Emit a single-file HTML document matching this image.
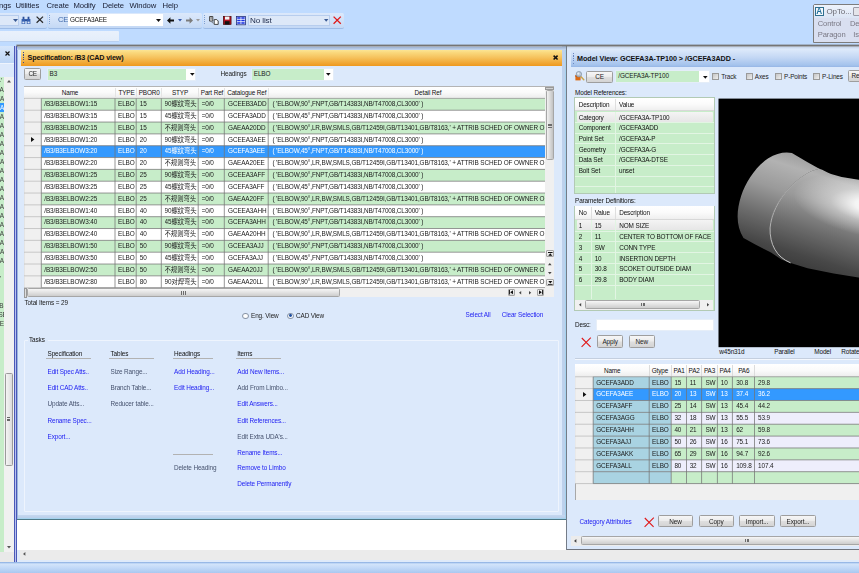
<!DOCTYPE html><html><head><meta charset="utf-8"><title>Specification</title><style>
html,body{margin:0;padding:0}
body{width:859px;height:573px;overflow:hidden;position:relative;background:#bfdbff;font-family:"Liberation Sans","Noto Sans CJK SC",sans-serif;font-size:6.4px;letter-spacing:-0.12px;color:#1a1a1a}
div{position:absolute;box-sizing:border-box}
svg{position:absolute;overflow:visible}
.t{height:10px;line-height:10px;white-space:nowrap;overflow:visible}
.b{font-weight:bold}
.btn{border:1px solid #9e9e9e;border-radius:1.5px;background:linear-gradient(#f6f6f6,#ececec 45%,#dedede 55%,#d4d4d4);text-align:center;font-size:6.4px;white-space:nowrap;color:#222}
.lnk{color:#1c1cf2}
.dis{color:#46526e}
</style></head><body style="filter:blur(0.35px)">
<div class="t" style="left:-1px;top:1.45px;font-size:7.7px;color:#181c30;">ngs</div>
<div class="t" style="left:15.5px;top:1.45px;font-size:7.7px;color:#181c30;">Utilities</div>
<div class="t" style="left:46.5px;top:1.45px;font-size:7.7px;color:#181c30;">Create</div>
<div class="t" style="left:73.5px;top:1.45px;font-size:7.7px;color:#181c30;">Modify</div>
<div class="t" style="left:102.5px;top:1.45px;font-size:7.7px;color:#181c30;">Delete</div>
<div class="t" style="left:129.5px;top:1.45px;font-size:7.7px;color:#181c30;">Window</div>
<div class="t" style="left:162.5px;top:1.45px;font-size:7.7px;color:#181c30;">Help</div>
<div style="left:0px;top:12.5px;width:46.5px;height:16px;background:linear-gradient(#dbe8fb,#cfe0f8 60%,#c3d8f5);border-bottom:1px solid #9dbbe6;border-radius:0 2px 2px 0"></div>
<div style="left:0px;top:14.5px;width:18.5px;height:11.5px;background:#dde8f8;border:1px solid #b7cdee;border-left:none"></div>
<svg style="left:12.5px;top:19px" width="5" height="3"><path d="M0 0h5L2.5 3z" fill="#3a5a94"/></svg>
<svg style="left:21px;top:15.5px" width="10" height="9" viewBox="0 0 10 9"><path d="M1.6 0.8h1.8v2.4H1.6zM6.6 0.8h1.8v2.4H6.6z" fill="#2b4f9a"/><path d="M0.6 3h3.6v5H0.6zM5.8 3h3.6v5H5.8z" fill="#3560b0"/><rect x="4" y="3.2" width="2" height="2" fill="#2b4f9a"/><rect x="1.4" y="5.6" width="2" height="1.8" fill="#dfe8f8"/><rect x="6.6" y="5.6" width="2" height="1.8" fill="#dfe8f8"/></svg>
<svg style="left:35.5px;top:16.3px" width="7.6" height="7.4" viewBox="0 0 7.6 7.4"><path d="M0.6 0.6L7 6.8M7 0.6L0.6 6.8" stroke="#2a2a2a" stroke-width="1.25"/></svg>
<div style="left:48px;top:12.5px;width:153.5px;height:16px;background:linear-gradient(#dbe8fb,#cfe0f8 60%,#c3d8f5);border-bottom:1px solid #9dbbe6;border-radius:2px"></div>
<div style="left:49.3px;top:15px;width:1px;height:10px;background:repeating-linear-gradient(#7f9fd0 0 1px,transparent 1px 2px)"></div>
<div class="t" style="left:58px;top:15.25px;font-size:7.6px;color:#3f68a8;">CE</div>
<div style="left:68px;top:14px;width:95px;height:11.5px;background:#fff"></div>
<div class="t" style="left:70px;top:14.75px;font-size:6.4px;color:#111;">GCEFA3AEE</div>
<svg style="left:156.3px;top:18.6px" width="5" height="3"><path d="M0 0h5L2.5 3z" fill="#111"/></svg>
<svg style="left:166.5px;top:16.8px" width="7" height="7" viewBox="0 0 7 7"><path d="M0 3.5L3.4 0.3V2.4H7V4.6H3.4V6.7z" fill="#111"/></svg>
<svg style="left:177.6px;top:19px" width="4" height="2.5"><path d="M0 0h4L2 2.5z" fill="#3558a8"/></svg>
<svg style="left:185.5px;top:16.8px" width="7" height="7" viewBox="0 0 7 7"><path d="M7 3.5L3.6 0.3V2.4H0V4.6H3.6V6.7z" fill="#7c7c7c"/></svg>
<svg style="left:196.3px;top:19px" width="4" height="2.5"><path d="M0 0h4L2 2.5z" fill="#9a9a9a"/></svg>
<div style="left:202.5px;top:12.5px;width:141.5px;height:16px;background:linear-gradient(#dbe8fb,#cfe0f8 60%,#c3d8f5);border-bottom:1px solid #9dbbe6;border-radius:2px"></div>
<div style="left:203.5px;top:15px;width:1px;height:10px;background:repeating-linear-gradient(#7f9fd0 0 1px,transparent 1px 2px)"></div>
<svg style="left:208.5px;top:15.8px" width="10" height="9" viewBox="0 0 10 9"><path d="M0.6 0.5h3.2v4.6H0.6z" fill="#e8e8e8" stroke="#333" stroke-width="0.9"/><path d="M1.4 1.8h1.6M1.4 3h1.6" stroke="#333" stroke-width="0.6"/><path d="M5.2 3.6h2.6l1.4 1.4v3.4H5.2z" fill="#fff" stroke="#333" stroke-width="0.9"/><path d="M2.6 6.2l2 1" stroke="#555" stroke-width="0.7"/></svg>
<svg style="left:223.2px;top:15.9px" width="8.4" height="8.8" viewBox="0 0 8.4 8.8"><rect x="0.3" y="0.3" width="7.8" height="8.2" fill="#b01020" stroke="#300" stroke-width="0.6"/><rect x="2" y="0.6" width="4.4" height="3" fill="#f4f4f4"/><rect x="1.8" y="5.2" width="4.8" height="3.3" fill="#111"/></svg>
<svg style="left:236px;top:15.7px" width="9.8" height="9.2" viewBox="0 0 9.8 9.2"><rect x="0.4" y="0.4" width="9" height="8.4" fill="#fff" stroke="#1c2a7a" stroke-width="0.8"/><rect x="1.2" y="1.2" width="3.4" height="1.6" fill="#1832e0"/><rect x="5.3" y="1.2" width="3.4" height="1.6" fill="#1832e0"/><rect x="1.2" y="3.7" width="3.4" height="1.6" fill="#1832e0"/><rect x="5.3" y="3.7" width="3.4" height="1.6" fill="#1832e0"/><rect x="1.2" y="6.2" width="3.4" height="1.6" fill="#1832e0"/><rect x="5.3" y="6.2" width="3.4" height="1.6" fill="#1832e0"/></svg>
<div style="left:248px;top:14.5px;width:82px;height:11.5px;background:#dde8f8;border:1px solid #b7cdee"></div>
<div class="t" style="left:250px;top:16.15px;font-size:8.1px;color:#1e2a4a;">No list</div>
<svg style="left:323.8px;top:19px" width="4.4" height="2.8"><path d="M0 0h4.4L2.2 2.8z" fill="#3a5a94"/></svg>
<svg style="left:332.7px;top:16px" width="8.4" height="8.4" viewBox="0 0 8.4 8.4"><path d="M0.6 0.6L7.8 7.8M7.8 0.6L0.6 7.8" stroke="#e01818" stroke-width="1.3"/></svg>
<div style="left:0px;top:30.5px;width:118.5px;height:11.5px;background:linear-gradient(#e9f1fc,#e3edfa);border-bottom:1px solid #b9d0f0;border-radius:0 1px 1px 0"></div>
<div style="left:812.5px;top:4px;width:50px;height:38.8px;background:#d9dff0;border:1px solid #7c7c7c;border-radius:2px 0 0 0"></div>
<div style="left:813.5px;top:5px;width:49px;height:13px;background:linear-gradient(#eef3fb,#dbe5f5)"></div>
<div style="left:815px;top:7px;width:8.8px;height:8.8px;background:#f4f8fc;border:1px solid #2f6f8f"></div>
<div class="t b" style="left:816.2px;top:6.85px;font-size:8.2px;color:#1f6f9a;">A</div>
<div class="t" style="left:826.5px;top:7.05px;font-size:8px;color:#6a6a72;">OpTo...</div>
<div style="left:853px;top:7px;width:10px;height:9px;background:#e4e4ea;border:1px solid #9a9aa6;border-radius:1px"></div>
<div class="t" style="left:817.7px;top:18.75px;font-size:7.6px;color:#7a7884;">Control</div>
<div class="t" style="left:850px;top:18.75px;font-size:7.6px;color:#7a7884;">De</div>
<div class="t" style="left:817.7px;top:29.65px;font-size:7.6px;color:#7a7884;">Paragon</div>
<div class="t" style="left:853.2px;top:29.65px;font-size:7.6px;color:#7a7884;">Is</div>
<div style="left:0px;top:46px;width:14.5px;height:516px;background:#f0f0f0"></div>
<div style="left:0px;top:46px;width:14.5px;height:17px;background:linear-gradient(#d6e6fb,#bcd5f5)"></div>
<svg style="left:5px;top:50.6px" width="5" height="5" viewBox="0 0 5 5"><path d="M0.5 0.5L4.5 4.5M4.5 0.5L0.5 4.5" stroke="#111" stroke-width="1.2"/></svg>
<div style="left:0px;top:63px;width:14.5px;height:13.5px;background:#dce9fb;border-top:0.8px solid #eef4fd"></div>
<div style="left:0px;top:76.5px;width:3.9px;height:475px;background:#c7edc9"></div>
<div style="left:0px;top:102.5px;width:4.2px;height:9px;background:#3399ff"></div>
<div class="t" style="left:-1px;top:76.05px;font-size:6.4px;color:#3a3a3a;width:4.9px;overflow:hidden;">-'</div>
<div class="t" style="left:-0.6px;top:85.05px;font-size:6.4px;color:#3a3a3a;width:4.5px;overflow:hidden;">A</div>
<div class="t" style="left:-3.4px;top:94.05px;font-size:6.4px;color:#3a3a3a;width:7.3px;overflow:hidden;">FA</div>
<div class="t" style="left:-3.4px;top:103.05px;font-size:6.4px;color:#fff;width:7.3px;overflow:hidden;">FA</div>
<div class="t" style="left:-1.4px;top:112.05px;font-size:6.4px;color:#3a3a3a;width:5.3px;overflow:hidden;">'A</div>
<div class="t" style="left:-1.4px;top:121.05px;font-size:6.4px;color:#3a3a3a;width:5.3px;overflow:hidden;">'A</div>
<div class="t" style="left:-1.4px;top:130.05px;font-size:6.4px;color:#3a3a3a;width:5.3px;overflow:hidden;">'A</div>
<div class="t" style="left:-1.4px;top:139.05px;font-size:6.4px;color:#3a3a3a;width:5.3px;overflow:hidden;">'A</div>
<div class="t" style="left:-1.4px;top:148.05px;font-size:6.4px;color:#3a3a3a;width:5.3px;overflow:hidden;">'A</div>
<div class="t" style="left:-3.4px;top:157.05px;font-size:6.4px;color:#3a3a3a;width:7.3px;overflow:hidden;">FA</div>
<div class="t" style="left:-1.4px;top:166.05px;font-size:6.4px;color:#3a3a3a;width:5.3px;overflow:hidden;">'A</div>
<div class="t" style="left:-1.4px;top:175.05px;font-size:6.4px;color:#3a3a3a;width:5.3px;overflow:hidden;">'A</div>
<div class="t" style="left:-1.4px;top:184.05px;font-size:6.4px;color:#3a3a3a;width:5.3px;overflow:hidden;">'A</div>
<div class="t" style="left:-1.4px;top:193.05px;font-size:6.4px;color:#3a3a3a;width:5.3px;overflow:hidden;">'A</div>
<div class="t" style="left:-1.4px;top:202.05px;font-size:6.4px;color:#3a3a3a;width:5.3px;overflow:hidden;">'A</div>
<div class="t" style="left:-1.4px;top:211.05px;font-size:6.4px;color:#3a3a3a;width:5.3px;overflow:hidden;">'A</div>
<div class="t" style="left:-1.4px;top:220.05px;font-size:6.4px;color:#3a3a3a;width:5.3px;overflow:hidden;">'A</div>
<div class="t" style="left:-1.4px;top:229.05px;font-size:6.4px;color:#3a3a3a;width:5.3px;overflow:hidden;">'A</div>
<div class="t" style="left:-1.4px;top:238.05px;font-size:6.4px;color:#3a3a3a;width:5.3px;overflow:hidden;">'A</div>
<div class="t" style="left:-3.4px;top:247.05px;font-size:6.4px;color:#3a3a3a;width:7.3px;overflow:hidden;">FA</div>
<div class="t" style="left:-1.4px;top:256.05px;font-size:6.4px;color:#3a3a3a;width:5.3px;overflow:hidden;">'A</div>
<div class="t" style="left:0px;top:274.05px;font-size:6.4px;color:#3a3a3a;width:3.9px;overflow:hidden;">'</div>
<div class="t" style="left:-0.8px;top:301.05px;font-size:6.4px;color:#3a3a3a;width:4.7px;overflow:hidden;">B</div>
<div class="t" style="left:-1.6px;top:310.05px;font-size:6.4px;color:#3a3a3a;width:5.5px;overflow:hidden;">SE</div>
<div class="t" style="left:-0.3px;top:319.05px;font-size:6.4px;color:#3a3a3a;width:4.2px;overflow:hidden;">E</div>
<div style="left:3.9px;top:76.5px;width:10px;height:475px;background:#f1f1f1"></div>
<svg style="left:7.3px;top:80px" width="4" height="2.4"><path d="M0 2.4h4L2 0z" fill="#555"/></svg>
<svg style="left:7.3px;top:545.5px" width="4" height="2.4"><path d="M0 0h4L2 2.4z" fill="#555"/></svg>
<div style="left:4.6px;top:372.5px;width:8px;height:93px;background:linear-gradient(90deg,#f4f4f4,#dcdcdc);border:1px solid #9a9a9a;border-radius:1.5px"></div>
<div style="left:6.8px;top:417px;width:3.5px;height:0.8px;background:#666"></div>
<div style="left:6.8px;top:418.7px;width:3.5px;height:0.8px;background:#666"></div>
<div style="left:6.8px;top:420.4px;width:3.5px;height:0.8px;background:#666"></div>
<div style="left:0px;top:551.6px;width:13.9px;height:10px;background:#e9e9e9"></div>
<div style="left:13.6px;top:46px;width:0.7px;height:515.6px;background:#a0a0a8"></div>
<div style="left:14.3px;top:46px;width:2.3px;height:515.6px;background:linear-gradient(90deg,#4a58b8 0,#4a58b8 30%,#b8c2ee 45%,#b8c2ee 58%,#4a58b8 70%,#4a58b8 100%)"></div>
<div style="left:16.5px;top:46.4px;width:549.5px;height:473px;background:#dce9fb"></div>
<div style="left:16.6px;top:46.4px;width:1px;height:515.4px;background:#e4eefc"></div>
<div style="left:17.4px;top:46.4px;width:0.8px;height:473px;background:#9db6dc"></div>
<div style="left:562.1px;top:46.4px;width:3.4px;height:472px;background:#bdd1ec"></div>
<div style="left:565.3px;top:46.4px;width:0.7px;height:472.4px;background:#a6d3ee"></div>
<div style="left:565.9px;top:46.4px;width:1px;height:503.6px;background:#747c88"></div>
<div style="left:18.2px;top:514.8px;width:547.3px;height:3.2px;background:linear-gradient(#c6d8f0,#bacfea)"></div>
<div style="left:18.2px;top:517.8px;width:547.8px;height:0.9px;background:#a6d3ee"></div>
<div style="left:17.4px;top:518.7px;width:548.6px;height:1px;background:#4f7a88"></div>
<div style="left:17.4px;top:46.6px;width:548.4px;height:3.4px;background:linear-gradient(#9db2d2,#c6d8f1)"></div>
<div style="left:21.3px;top:49.8px;width:540.9px;height:15.8px;background:linear-gradient(#fce594 0,#fad97e 15%,#f5c05a 50%,#f1a836 80%,#ee981e 100%)"></div>
<div style="left:23px;top:52px;width:1.2px;height:11px;background:repeating-linear-gradient(#3a4a8a 0 1.2px,transparent 1.2px 2.4px)"></div>
<div class="t b" style="left:27.6px;top:52.85px;font-size:7.2px;color:#111;letter-spacing:-0.15px;">Specification: /B3 (CAD view)</div>
<svg style="left:553.3px;top:55px" width="5.2" height="5.2" viewBox="0 0 5.2 5.2"><path d="M0.6 0.6L4.6 4.6M4.6 0.6L0.6 4.6" stroke="#111" stroke-width="1.5"/></svg>
<div class="btn" style="left:24.3px;top:68.3px;width:16.8px;height:12.2px;line-height:10.9px">CE</div>
<div style="left:46.7px;top:68.3px;width:149px;height:12.4px;background:#fff;border:1px solid #e4edf8"></div>
<div style="left:47.7px;top:69.3px;width:138.5px;height:10.4px;background:#c7edc9"></div>
<div class="t" style="left:49.5px;top:68.85px;font-size:6.4px;">B3</div>
<svg style="left:189.5px;top:73.3px" width="4.6" height="2.8"><path d="M0 0h4.6L2.3 2.8z" fill="#111"/></svg>
<div class="t" style="left:220.5px;top:69.05px;font-size:6.4px;">Headings</div>
<div style="left:251px;top:68.3px;width:82.6px;height:12.4px;background:#fff;border:1px solid #e4edf8"></div>
<div style="left:252px;top:69.3px;width:71.5px;height:10.4px;background:#c7edc9"></div>
<div class="t" style="left:253.8px;top:68.85px;font-size:6.4px;">ELBO</div>
<svg style="left:326.3px;top:73.3px" width="4.6" height="2.8"><path d="M0 0h4.6L2.3 2.8z" fill="#111"/></svg>
<div style="left:23.7px;top:86px;width:530.8px;height:211.3px;background:#fff;border-top:1px solid #b4b4b4;border-left:1px solid #b4b4b4"></div>
<div style="left:24.2px;top:86.5px;width:521.1px;height:11.9px;background:linear-gradient(#ffffff 0,#fafafa 50%,#ececec 100%)"></div>
<div class="t" style="left:40px;top:87.55px;font-size:6.4px;color:#111;width:60px;text-align:center;">Name</div>
<div class="t" style="left:96.5px;top:87.55px;font-size:6.4px;color:#111;width:60px;text-align:center;">TYPE</div>
<div class="t" style="left:119.2px;top:87.55px;font-size:6.4px;color:#111;width:60px;text-align:center;">PBOR0</div>
<div class="t" style="left:150px;top:87.55px;font-size:6.4px;color:#111;width:60px;text-align:center;">STYP</div>
<div class="t" style="left:182px;top:87.55px;font-size:6.4px;color:#111;width:60px;text-align:center;">Part Ref</div>
<div class="t" style="left:216.8px;top:87.55px;font-size:6.4px;color:#111;width:60px;text-align:center;">Catalogue Ref</div>
<div class="t" style="left:398px;top:87.55px;font-size:6.4px;color:#111;width:60px;text-align:center;">Detail Ref</div>
<div style="left:114.7px;top:87.5px;width:0.6px;height:9.9px;background:#e4e4e4"></div>
<div style="left:135.9px;top:87.5px;width:0.6px;height:9.9px;background:#e4e4e4"></div>
<div style="left:161px;top:87.5px;width:0.6px;height:9.9px;background:#e4e4e4"></div>
<div style="left:197.9px;top:87.5px;width:0.6px;height:9.9px;background:#e4e4e4"></div>
<div style="left:224px;top:87.5px;width:0.6px;height:9.9px;background:#e4e4e4"></div>
<div style="left:267.9px;top:87.5px;width:0.6px;height:9.9px;background:#e4e4e4"></div>
<svg style="left:0;top:0" width="859" height="573" viewBox="0 0 859 573"><rect x="24.2" y="98.4" width="17.1" height="11.83" fill="#f0f0f0" /><rect x="41.3" y="98.4" width="504" height="11.83" fill="#c7edc9" /><rect x="24.2" y="110.23" width="17.1" height="11.83" fill="#f0f0f0" /><rect x="41.3" y="110.23" width="504" height="11.83" fill="#fff" /><rect x="24.2" y="122.06" width="17.1" height="11.83" fill="#f0f0f0" /><rect x="41.3" y="122.06" width="504" height="11.83" fill="#c7edc9" /><rect x="24.2" y="133.89" width="17.1" height="11.83" fill="#f0f0f0" /><rect x="41.3" y="133.89" width="504" height="11.83" fill="#fff" /><rect x="24.2" y="145.72" width="17.1" height="11.83" fill="#f0f0f0" /><rect x="41.3" y="145.72" width="504" height="11.83" fill="#3399ff" /><rect x="24.2" y="157.55" width="17.1" height="11.83" fill="#f0f0f0" /><rect x="41.3" y="157.55" width="504" height="11.83" fill="#fff" /><rect x="24.2" y="169.38" width="17.1" height="11.83" fill="#f0f0f0" /><rect x="41.3" y="169.38" width="504" height="11.83" fill="#c7edc9" /><rect x="24.2" y="181.21" width="17.1" height="11.83" fill="#f0f0f0" /><rect x="41.3" y="181.21" width="504" height="11.83" fill="#fff" /><rect x="24.2" y="193.04" width="17.1" height="11.83" fill="#f0f0f0" /><rect x="41.3" y="193.04" width="504" height="11.83" fill="#c7edc9" /><rect x="24.2" y="204.87" width="17.1" height="11.83" fill="#f0f0f0" /><rect x="41.3" y="204.87" width="504" height="11.83" fill="#fff" /><rect x="24.2" y="216.7" width="17.1" height="11.83" fill="#f0f0f0" /><rect x="41.3" y="216.7" width="504" height="11.83" fill="#c7edc9" /><rect x="24.2" y="228.53" width="17.1" height="11.83" fill="#f0f0f0" /><rect x="41.3" y="228.53" width="504" height="11.83" fill="#fff" /><rect x="24.2" y="240.36" width="17.1" height="11.83" fill="#f0f0f0" /><rect x="41.3" y="240.36" width="504" height="11.83" fill="#c7edc9" /><rect x="24.2" y="252.19" width="17.1" height="11.83" fill="#f0f0f0" /><rect x="41.3" y="252.19" width="504" height="11.83" fill="#fff" /><rect x="24.2" y="264.02" width="17.1" height="11.83" fill="#f0f0f0" /><rect x="41.3" y="264.02" width="504" height="11.83" fill="#c7edc9" /><rect x="24.2" y="275.85" width="17.1" height="11.83" fill="#f0f0f0" /><rect x="41.3" y="275.85" width="504" height="11.83" fill="#fff" /><path d="M24.2 98.4H41.3" stroke="#b4b4b4" stroke-width="0.7"/><path d="M41.3 98.4H545.3" stroke="#8e8e8e" stroke-width="0.75"/><path d="M24.2 110.23H41.3" stroke="#b4b4b4" stroke-width="0.7"/><path d="M41.3 110.23H545.3" stroke="#747474" stroke-width="0.75"/><path d="M24.2 122.06H41.3" stroke="#b4b4b4" stroke-width="0.7"/><path d="M41.3 122.06H545.3" stroke="#747474" stroke-width="0.75"/><path d="M24.2 133.89H41.3" stroke="#b4b4b4" stroke-width="0.7"/><path d="M41.3 133.89H545.3" stroke="#747474" stroke-width="0.75"/><path d="M24.2 145.72H41.3" stroke="#b4b4b4" stroke-width="0.7"/><path d="M41.3 145.72H545.3" stroke="#747474" stroke-width="0.75"/><path d="M24.2 157.55H41.3" stroke="#b4b4b4" stroke-width="0.7"/><path d="M41.3 157.55H545.3" stroke="#747474" stroke-width="0.75"/><path d="M24.2 169.38H41.3" stroke="#b4b4b4" stroke-width="0.7"/><path d="M41.3 169.38H545.3" stroke="#747474" stroke-width="0.75"/><path d="M24.2 181.21H41.3" stroke="#b4b4b4" stroke-width="0.7"/><path d="M41.3 181.21H545.3" stroke="#747474" stroke-width="0.75"/><path d="M24.2 193.04H41.3" stroke="#b4b4b4" stroke-width="0.7"/><path d="M41.3 193.04H545.3" stroke="#747474" stroke-width="0.75"/><path d="M24.2 204.87H41.3" stroke="#b4b4b4" stroke-width="0.7"/><path d="M41.3 204.87H545.3" stroke="#747474" stroke-width="0.75"/><path d="M24.2 216.7H41.3" stroke="#b4b4b4" stroke-width="0.7"/><path d="M41.3 216.7H545.3" stroke="#747474" stroke-width="0.75"/><path d="M24.2 228.53H41.3" stroke="#b4b4b4" stroke-width="0.7"/><path d="M41.3 228.53H545.3" stroke="#747474" stroke-width="0.75"/><path d="M24.2 240.36H41.3" stroke="#b4b4b4" stroke-width="0.7"/><path d="M41.3 240.36H545.3" stroke="#747474" stroke-width="0.75"/><path d="M24.2 252.19H41.3" stroke="#b4b4b4" stroke-width="0.7"/><path d="M41.3 252.19H545.3" stroke="#747474" stroke-width="0.75"/><path d="M24.2 264.02H41.3" stroke="#b4b4b4" stroke-width="0.7"/><path d="M41.3 264.02H545.3" stroke="#747474" stroke-width="0.75"/><path d="M24.2 275.85H41.3" stroke="#b4b4b4" stroke-width="0.7"/><path d="M41.3 275.85H545.3" stroke="#747474" stroke-width="0.75"/><path d="M24.2 287.68H41.3" stroke="#b4b4b4" stroke-width="0.7"/><path d="M41.3 287.68H545.3" stroke="#747474" stroke-width="0.75"/><path d="M41.3 98.4V287.68" stroke="#747474" stroke-width="0.75"/><path d="M115 98.4V287.68" stroke="#747474" stroke-width="0.75"/><path d="M136.2 98.4V287.68" stroke="#747474" stroke-width="0.75"/><path d="M161.3 98.4V287.68" stroke="#747474" stroke-width="0.75"/><path d="M198.2 98.4V287.68" stroke="#747474" stroke-width="0.75"/><path d="M224.3 98.4V287.68" stroke="#747474" stroke-width="0.75"/><path d="M268.2 98.4V287.68" stroke="#747474" stroke-width="0.75"/></svg>
<div class="t" style="left:44.3px;top:99.17px;width:70.2px;overflow:hidden;color:#1a1a1a">/B3/B3ELBOW1:15</div>
<div class="t" style="left:118px;top:99.17px;width:17.7px;overflow:hidden;color:#1a1a1a">ELBO</div>
<div class="t" style="left:139.8px;top:99.17px;width:21px;overflow:hidden;color:#1a1a1a">15</div>
<div class="t" style="left:164.6px;top:99.17px;width:33.1px;overflow:hidden;color:#1a1a1a">90螺纹弯头</div>
<div class="t" style="left:201.6px;top:99.17px;width:22.2px;overflow:hidden;color:#1a1a1a">=0/0</div>
<div class="t" style="left:228.1px;top:99.17px;width:39.6px;overflow:hidden;color:#1a1a1a">GCEEB3ADD</div>
<div class="t" style="left:272.4px;top:99.17px;width:272.4px;overflow:hidden;color:#1a1a1a">( 'ELBOW,90°,FNPT,GB/T14383I,NB/T47008,CL3000' )</div>
<div class="t" style="left:44.3px;top:111px;width:70.2px;overflow:hidden;color:#1a1a1a">/B3/B3ELBOW3:15</div>
<div class="t" style="left:118px;top:111px;width:17.7px;overflow:hidden;color:#1a1a1a">ELBO</div>
<div class="t" style="left:139.8px;top:111px;width:21px;overflow:hidden;color:#1a1a1a">15</div>
<div class="t" style="left:164.6px;top:111px;width:33.1px;overflow:hidden;color:#1a1a1a">45螺纹弯头</div>
<div class="t" style="left:201.6px;top:111px;width:22.2px;overflow:hidden;color:#1a1a1a">=0/0</div>
<div class="t" style="left:228.1px;top:111px;width:39.6px;overflow:hidden;color:#1a1a1a">GCEFA3ADD</div>
<div class="t" style="left:272.4px;top:111px;width:272.4px;overflow:hidden;color:#1a1a1a">( 'ELBOW,45°,FNPT,GB/T14383I,NB/T47008,CL3000' )</div>
<div class="t" style="left:44.3px;top:122.83px;width:70.2px;overflow:hidden;color:#1a1a1a">/B3/B3ELBOW2:15</div>
<div class="t" style="left:118px;top:122.83px;width:17.7px;overflow:hidden;color:#1a1a1a">ELBO</div>
<div class="t" style="left:139.8px;top:122.83px;width:21px;overflow:hidden;color:#1a1a1a">15</div>
<div class="t" style="left:164.6px;top:122.83px;width:33.1px;overflow:hidden;color:#1a1a1a">不规则弯头</div>
<div class="t" style="left:201.6px;top:122.83px;width:22.2px;overflow:hidden;color:#1a1a1a">=0/0</div>
<div class="t" style="left:228.1px;top:122.83px;width:39.6px;overflow:hidden;color:#1a1a1a">GAEAA20DD</div>
<div class="t" style="left:272.4px;top:122.83px;width:272.4px;overflow:hidden;color:#1a1a1a">( 'ELBOW,90°,LR,BW,SMLS,GB/T12459I,GB/T13401,GB/T8163,' + ATTRIB SCHED OF OWNER OF OWNER + ',' )</div>
<div class="t" style="left:44.3px;top:134.66px;width:70.2px;overflow:hidden;color:#1a1a1a">/B3/B3ELBOW1:20</div>
<div class="t" style="left:118px;top:134.66px;width:17.7px;overflow:hidden;color:#1a1a1a">ELBO</div>
<div class="t" style="left:139.8px;top:134.66px;width:21px;overflow:hidden;color:#1a1a1a">20</div>
<div class="t" style="left:164.6px;top:134.66px;width:33.1px;overflow:hidden;color:#1a1a1a">90螺纹弯头</div>
<div class="t" style="left:201.6px;top:134.66px;width:22.2px;overflow:hidden;color:#1a1a1a">=0/0</div>
<div class="t" style="left:228.1px;top:134.66px;width:39.6px;overflow:hidden;color:#1a1a1a">GCEEA3AEE</div>
<div class="t" style="left:272.4px;top:134.66px;width:272.4px;overflow:hidden;color:#1a1a1a">( 'ELBOW,90°,FNPT,GB/T14383I,NB/T47008,CL3000' )</div>
<div class="t" style="left:44.3px;top:146.48px;width:70.2px;overflow:hidden;color:#fff">/B3/B3ELBOW3:20</div>
<div class="t" style="left:118px;top:146.48px;width:17.7px;overflow:hidden;color:#fff">ELBO</div>
<div class="t" style="left:139.8px;top:146.48px;width:21px;overflow:hidden;color:#fff">20</div>
<div class="t" style="left:164.6px;top:146.48px;width:33.1px;overflow:hidden;color:#fff">45螺纹弯头</div>
<div class="t" style="left:201.6px;top:146.48px;width:22.2px;overflow:hidden;color:#fff">=0/0</div>
<div class="t" style="left:228.1px;top:146.48px;width:39.6px;overflow:hidden;color:#fff">GCEFA3AEE</div>
<div class="t" style="left:272.4px;top:146.48px;width:272.4px;overflow:hidden;color:#fff">( 'ELBOW,45°,FNPT,GB/T14383I,NB/T47008,CL3000' )</div>
<div class="t" style="left:44.3px;top:158.31px;width:70.2px;overflow:hidden;color:#1a1a1a">/B3/B3ELBOW2:20</div>
<div class="t" style="left:118px;top:158.31px;width:17.7px;overflow:hidden;color:#1a1a1a">ELBO</div>
<div class="t" style="left:139.8px;top:158.31px;width:21px;overflow:hidden;color:#1a1a1a">20</div>
<div class="t" style="left:164.6px;top:158.31px;width:33.1px;overflow:hidden;color:#1a1a1a">不规则弯头</div>
<div class="t" style="left:201.6px;top:158.31px;width:22.2px;overflow:hidden;color:#1a1a1a">=0/0</div>
<div class="t" style="left:228.1px;top:158.31px;width:39.6px;overflow:hidden;color:#1a1a1a">GAEAA20EE</div>
<div class="t" style="left:272.4px;top:158.31px;width:272.4px;overflow:hidden;color:#1a1a1a">( 'ELBOW,90°,LR,BW,SMLS,GB/T12459I,GB/T13401,GB/T8163,' + ATTRIB SCHED OF OWNER OF OWNER + ',' )</div>
<div class="t" style="left:44.3px;top:170.14px;width:70.2px;overflow:hidden;color:#1a1a1a">/B3/B3ELBOW1:25</div>
<div class="t" style="left:118px;top:170.14px;width:17.7px;overflow:hidden;color:#1a1a1a">ELBO</div>
<div class="t" style="left:139.8px;top:170.14px;width:21px;overflow:hidden;color:#1a1a1a">25</div>
<div class="t" style="left:164.6px;top:170.14px;width:33.1px;overflow:hidden;color:#1a1a1a">90螺纹弯头</div>
<div class="t" style="left:201.6px;top:170.14px;width:22.2px;overflow:hidden;color:#1a1a1a">=0/0</div>
<div class="t" style="left:228.1px;top:170.14px;width:39.6px;overflow:hidden;color:#1a1a1a">GCEEA3AFF</div>
<div class="t" style="left:272.4px;top:170.14px;width:272.4px;overflow:hidden;color:#1a1a1a">( 'ELBOW,90°,FNPT,GB/T14383I,NB/T47008,CL3000' )</div>
<div class="t" style="left:44.3px;top:181.97px;width:70.2px;overflow:hidden;color:#1a1a1a">/B3/B3ELBOW3:25</div>
<div class="t" style="left:118px;top:181.97px;width:17.7px;overflow:hidden;color:#1a1a1a">ELBO</div>
<div class="t" style="left:139.8px;top:181.97px;width:21px;overflow:hidden;color:#1a1a1a">25</div>
<div class="t" style="left:164.6px;top:181.97px;width:33.1px;overflow:hidden;color:#1a1a1a">45螺纹弯头</div>
<div class="t" style="left:201.6px;top:181.97px;width:22.2px;overflow:hidden;color:#1a1a1a">=0/0</div>
<div class="t" style="left:228.1px;top:181.97px;width:39.6px;overflow:hidden;color:#1a1a1a">GCEFA3AFF</div>
<div class="t" style="left:272.4px;top:181.97px;width:272.4px;overflow:hidden;color:#1a1a1a">( 'ELBOW,45°,FNPT,GB/T14383I,NB/T47008,CL3000' )</div>
<div class="t" style="left:44.3px;top:193.81px;width:70.2px;overflow:hidden;color:#1a1a1a">/B3/B3ELBOW2:25</div>
<div class="t" style="left:118px;top:193.81px;width:17.7px;overflow:hidden;color:#1a1a1a">ELBO</div>
<div class="t" style="left:139.8px;top:193.81px;width:21px;overflow:hidden;color:#1a1a1a">25</div>
<div class="t" style="left:164.6px;top:193.81px;width:33.1px;overflow:hidden;color:#1a1a1a">不规则弯头</div>
<div class="t" style="left:201.6px;top:193.81px;width:22.2px;overflow:hidden;color:#1a1a1a">=0/0</div>
<div class="t" style="left:228.1px;top:193.81px;width:39.6px;overflow:hidden;color:#1a1a1a">GAEAA20FF</div>
<div class="t" style="left:272.4px;top:193.81px;width:272.4px;overflow:hidden;color:#1a1a1a">( 'ELBOW,90°,LR,BW,SMLS,GB/T12459I,GB/T13401,GB/T8163,' + ATTRIB SCHED OF OWNER OF OWNER + ',' )</div>
<div class="t" style="left:44.3px;top:205.63px;width:70.2px;overflow:hidden;color:#1a1a1a">/B3/B3ELBOW1:40</div>
<div class="t" style="left:118px;top:205.63px;width:17.7px;overflow:hidden;color:#1a1a1a">ELBO</div>
<div class="t" style="left:139.8px;top:205.63px;width:21px;overflow:hidden;color:#1a1a1a">40</div>
<div class="t" style="left:164.6px;top:205.63px;width:33.1px;overflow:hidden;color:#1a1a1a">90螺纹弯头</div>
<div class="t" style="left:201.6px;top:205.63px;width:22.2px;overflow:hidden;color:#1a1a1a">=0/0</div>
<div class="t" style="left:228.1px;top:205.63px;width:39.6px;overflow:hidden;color:#1a1a1a">GCEEA3AHH</div>
<div class="t" style="left:272.4px;top:205.63px;width:272.4px;overflow:hidden;color:#1a1a1a">( 'ELBOW,90°,FNPT,GB/T14383I,NB/T47008,CL3000' )</div>
<div class="t" style="left:44.3px;top:217.46px;width:70.2px;overflow:hidden;color:#1a1a1a">/B3/B3ELBOW3:40</div>
<div class="t" style="left:118px;top:217.46px;width:17.7px;overflow:hidden;color:#1a1a1a">ELBO</div>
<div class="t" style="left:139.8px;top:217.46px;width:21px;overflow:hidden;color:#1a1a1a">40</div>
<div class="t" style="left:164.6px;top:217.46px;width:33.1px;overflow:hidden;color:#1a1a1a">45螺纹弯头</div>
<div class="t" style="left:201.6px;top:217.46px;width:22.2px;overflow:hidden;color:#1a1a1a">=0/0</div>
<div class="t" style="left:228.1px;top:217.46px;width:39.6px;overflow:hidden;color:#1a1a1a">GCEFA3AHH</div>
<div class="t" style="left:272.4px;top:217.46px;width:272.4px;overflow:hidden;color:#1a1a1a">( 'ELBOW,45°,FNPT,GB/T14383I,NB/T47008,CL3000' )</div>
<div class="t" style="left:44.3px;top:229.29px;width:70.2px;overflow:hidden;color:#1a1a1a">/B3/B3ELBOW2:40</div>
<div class="t" style="left:118px;top:229.29px;width:17.7px;overflow:hidden;color:#1a1a1a">ELBO</div>
<div class="t" style="left:139.8px;top:229.29px;width:21px;overflow:hidden;color:#1a1a1a">40</div>
<div class="t" style="left:164.6px;top:229.29px;width:33.1px;overflow:hidden;color:#1a1a1a">不规则弯头</div>
<div class="t" style="left:201.6px;top:229.29px;width:22.2px;overflow:hidden;color:#1a1a1a">=0/0</div>
<div class="t" style="left:228.1px;top:229.29px;width:39.6px;overflow:hidden;color:#1a1a1a">GAEAA20HH</div>
<div class="t" style="left:272.4px;top:229.29px;width:272.4px;overflow:hidden;color:#1a1a1a">( 'ELBOW,90°,LR,BW,SMLS,GB/T12459I,GB/T13401,GB/T8163,' + ATTRIB SCHED OF OWNER OF OWNER + ',' )</div>
<div class="t" style="left:44.3px;top:241.12px;width:70.2px;overflow:hidden;color:#1a1a1a">/B3/B3ELBOW1:50</div>
<div class="t" style="left:118px;top:241.12px;width:17.7px;overflow:hidden;color:#1a1a1a">ELBO</div>
<div class="t" style="left:139.8px;top:241.12px;width:21px;overflow:hidden;color:#1a1a1a">50</div>
<div class="t" style="left:164.6px;top:241.12px;width:33.1px;overflow:hidden;color:#1a1a1a">90螺纹弯头</div>
<div class="t" style="left:201.6px;top:241.12px;width:22.2px;overflow:hidden;color:#1a1a1a">=0/0</div>
<div class="t" style="left:228.1px;top:241.12px;width:39.6px;overflow:hidden;color:#1a1a1a">GCEEA3AJJ</div>
<div class="t" style="left:272.4px;top:241.12px;width:272.4px;overflow:hidden;color:#1a1a1a">( 'ELBOW,90°,FNPT,GB/T14383I,NB/T47008,CL3000' )</div>
<div class="t" style="left:44.3px;top:252.96px;width:70.2px;overflow:hidden;color:#1a1a1a">/B3/B3ELBOW3:50</div>
<div class="t" style="left:118px;top:252.96px;width:17.7px;overflow:hidden;color:#1a1a1a">ELBO</div>
<div class="t" style="left:139.8px;top:252.96px;width:21px;overflow:hidden;color:#1a1a1a">50</div>
<div class="t" style="left:164.6px;top:252.96px;width:33.1px;overflow:hidden;color:#1a1a1a">45螺纹弯头</div>
<div class="t" style="left:201.6px;top:252.96px;width:22.2px;overflow:hidden;color:#1a1a1a">=0/0</div>
<div class="t" style="left:228.1px;top:252.96px;width:39.6px;overflow:hidden;color:#1a1a1a">GCEFA3AJJ</div>
<div class="t" style="left:272.4px;top:252.96px;width:272.4px;overflow:hidden;color:#1a1a1a">( 'ELBOW,45°,FNPT,GB/T14383I,NB/T47008,CL3000' )</div>
<div class="t" style="left:44.3px;top:264.79px;width:70.2px;overflow:hidden;color:#1a1a1a">/B3/B3ELBOW2:50</div>
<div class="t" style="left:118px;top:264.79px;width:17.7px;overflow:hidden;color:#1a1a1a">ELBO</div>
<div class="t" style="left:139.8px;top:264.79px;width:21px;overflow:hidden;color:#1a1a1a">50</div>
<div class="t" style="left:164.6px;top:264.79px;width:33.1px;overflow:hidden;color:#1a1a1a">不规则弯头</div>
<div class="t" style="left:201.6px;top:264.79px;width:22.2px;overflow:hidden;color:#1a1a1a">=0/0</div>
<div class="t" style="left:228.1px;top:264.79px;width:39.6px;overflow:hidden;color:#1a1a1a">GAEAA20JJ</div>
<div class="t" style="left:272.4px;top:264.79px;width:272.4px;overflow:hidden;color:#1a1a1a">( 'ELBOW,90°,LR,BW,SMLS,GB/T12459I,GB/T13401,GB/T8163,' + ATTRIB SCHED OF OWNER OF OWNER + ',' )</div>
<div class="t" style="left:44.3px;top:276.62px;width:70.2px;overflow:hidden;color:#1a1a1a">/B3/B3ELBOW2:80</div>
<div class="t" style="left:118px;top:276.62px;width:17.7px;overflow:hidden;color:#1a1a1a">ELBO</div>
<div class="t" style="left:139.8px;top:276.62px;width:21px;overflow:hidden;color:#1a1a1a">80</div>
<div class="t" style="left:164.6px;top:276.62px;width:33.1px;overflow:hidden;color:#1a1a1a">90对焊弯头</div>
<div class="t" style="left:201.6px;top:276.62px;width:22.2px;overflow:hidden;color:#1a1a1a">=0/0</div>
<div class="t" style="left:228.1px;top:276.62px;width:39.6px;overflow:hidden;color:#1a1a1a">GAEAA20LL</div>
<div class="t" style="left:272.4px;top:276.62px;width:272.4px;overflow:hidden;color:#1a1a1a">( 'ELBOW,90°,LR,BW,SMLS,GB/T12459I,GB/T13401,GB/T8163,' + ATTRIB SCHED OF OWNER OF OWNER + ',' )</div>
<svg style="left:30.6px;top:137.29px" width="3.4" height="5"><path d="M0 0L3.4 2.5L0 5z" fill="#111"/></svg>
<div style="left:545.3px;top:86.5px;width:9.2px;height:201.18px;background:#f0f0f0"></div>
<div style="left:545.3px;top:86.5px;width:9.2px;height:3.6px;background:linear-gradient(#e8e8e8,#b8b8b8);border:0.5px solid #999"></div>
<div style="left:545.6px;top:90.2px;width:8.6px;height:69.5px;background:linear-gradient(90deg,#f2f2f2,#dadada 50%,#c2c2c2);border:0.7px solid #a6a6a6;border-radius:1.5px"></div>
<div style="left:548px;top:123.6px;width:3.6px;height:0.7px;background:#6c6c6c"></div>
<div style="left:548px;top:125.2px;width:3.6px;height:0.7px;background:#6c6c6c"></div>
<div style="left:548px;top:126.8px;width:3.6px;height:0.7px;background:#6c6c6c"></div>
<div style="left:546.3px;top:250px;width:7.4px;height:7.3px;background:linear-gradient(#f8f8f8,#dcdcdc);border:0.7px solid #a4a4a4;border-radius:1px"></div>
<svg style="left:547.7px;top:251.8px" width="4.6" height="3.8" viewBox="0 0 4.6 3.8"><path d="M0 0h4.6v0.9H0zM0.3 3.8h4L2.3 1.2z" fill="#111"/></svg>
<svg style="left:548.2px;top:262.9px" width="3.6" height="2.2"><path d="M0 2.2h3.6L1.8 0z" fill="#444"/></svg>
<svg style="left:548.2px;top:272px" width="3.6" height="2.2"><path d="M0 0h3.6L1.8 2.2z" fill="#444"/></svg>
<div style="left:546.3px;top:278.8px;width:7.4px;height:7.3px;background:linear-gradient(#f8f8f8,#dcdcdc);border:0.7px solid #a4a4a4;border-radius:1px"></div>
<svg style="left:547.7px;top:280.6px" width="4.6" height="3.8" viewBox="0 0 4.6 3.8"><path d="M0 2.9h4.6v0.9H0zM0.3 0h4L2.3 2.6z" fill="#111"/></svg>
<div style="left:24.2px;top:287.68px;width:530.3px;height:9.62px;background:#f0f0f0"></div>
<div style="left:24.2px;top:287.98px;width:2.6px;height:9.6px;background:linear-gradient(90deg,#f4f4f4,#c8c8c8);border:0.6px solid #999"></div>
<div style="left:27px;top:288.08px;width:312.6px;height:9.3px;background:linear-gradient(#f6f6f6,#e2e2e2 50%,#cdcdcd);border:0.7px solid #a6a6a6;border-radius:1.5px"></div>
<div style="left:181.3px;top:290.98px;width:0.7px;height:3.6px;background:#6c6c6c"></div>
<div style="left:182.9px;top:290.98px;width:0.7px;height:3.6px;background:#6c6c6c"></div>
<div style="left:184.5px;top:290.98px;width:0.7px;height:3.6px;background:#6c6c6c"></div>
<div style="left:507.6px;top:288.58px;width:7.6px;height:7.7px;background:linear-gradient(#f8f8f8,#dcdcdc);border:0.7px solid #a4a4a4;border-radius:1px"></div>
<svg style="left:509.4px;top:290.38px" width="4" height="4.4" viewBox="0 0 4 4.4"><path d="M0 0h0.9v4.4H0zM4 0.2v4L1.2 2.2z" fill="#111"/></svg>
<svg style="left:519px;top:290.78px" width="2.2" height="3.6"><path d="M2.2 0v3.6L0 1.8z" fill="#444"/></svg>
<svg style="left:529px;top:290.78px" width="2.2" height="3.6"><path d="M0 0v3.6L2.2 1.8z" fill="#444"/></svg>
<div style="left:536.8px;top:288.58px;width:7.6px;height:7.7px;background:linear-gradient(#f8f8f8,#dcdcdc);border:0.7px solid #a4a4a4;border-radius:1px"></div>
<svg style="left:538.6px;top:290.38px" width="4" height="4.4" viewBox="0 0 4 4.4"><path d="M3.1 0h0.9v4.4H3.1zM0 0.2v4L2.8 2.2z" fill="#111"/></svg>
<div class="t" style="left:24.5px;top:298.25px;font-size:6.4px;">Total Items = 29</div>
<div style="left:242.3px;top:312.6px;width:6.4px;height:6.4px;border-radius:50%;background:radial-gradient(#fff 40%,#e0e4ea);border:0.8px solid #8a96a8"></div>
<div class="t" style="left:251px;top:311.25px;font-size:6.4px;color:#222;">Eng. View</div>
<div style="left:287.3px;top:312.6px;width:6.4px;height:6.4px;border-radius:50%;background:radial-gradient(#fff 40%,#e0e4ea);border:0.8px solid #8a96a8"></div>
<div style="left:289.1px;top:314.4px;width:2.8px;height:2.8px;border-radius:50%;background:#1f4fa0"></div>
<div class="t" style="left:296px;top:311.25px;font-size:6.4px;color:#222;">CAD View</div>
<div class="t lnk" style="left:465.5px;top:309.95px;font-size:6.4px;">Select All</div>
<div class="t lnk" style="left:501.7px;top:309.95px;font-size:6.4px;">Clear Selection</div>
<div style="left:24.2px;top:340px;width:534.9px;height:171.5px;border:1px solid #eef4fd;border-radius:1px"></div>
<div style="left:27.5px;top:335px;width:20.5px;height:10px;background:#dce9fb"></div>
<div class="t" style="left:29px;top:335.45px;font-size:6.4px;color:#111;">Tasks</div>
<div class="t" style="left:47.5px;top:348.65px;font-size:6.4px;color:#111;">Specification</div>
<div style="left:46.2px;top:358.2px;width:45px;height:0.8px;background:#b2b2b2"></div>
<div class="t" style="left:110.5px;top:348.65px;font-size:6.4px;color:#111;">Tables</div>
<div style="left:109.2px;top:358.2px;width:45px;height:0.8px;background:#b2b2b2"></div>
<div class="t" style="left:174px;top:348.65px;font-size:6.4px;color:#111;">Headings</div>
<div style="left:172.7px;top:358.2px;width:40.5px;height:0.8px;background:#b2b2b2"></div>
<div class="t" style="left:237.3px;top:348.65px;font-size:6.4px;color:#111;">Items</div>
<div style="left:236px;top:358.2px;width:45px;height:0.8px;background:#b2b2b2"></div>
<div class="t lnk" style="left:47.5px;top:366.95px;font-size:6.4px;">Edit Spec Atts..</div>
<div class="t lnk" style="left:47.5px;top:383.25px;font-size:6.4px;">Edit CAD Atts..</div>
<div class="t dis" style="left:47.5px;top:399.45px;font-size:6.4px;">Update Atts...</div>
<div class="t lnk" style="left:47.5px;top:415.75px;font-size:6.4px;">Rename Spec...</div>
<div class="t lnk" style="left:47.5px;top:432.05px;font-size:6.4px;">Export...</div>
<div class="t dis" style="left:110.5px;top:366.95px;font-size:6.4px;">Size Range...</div>
<div class="t dis" style="left:110.5px;top:383.25px;font-size:6.4px;">Branch Table...</div>
<div class="t dis" style="left:110.5px;top:399.45px;font-size:6.4px;">Reducer table...</div>
<div class="t lnk" style="left:174px;top:366.95px;font-size:6.4px;">Add Heading...</div>
<div class="t lnk" style="left:174px;top:383.25px;font-size:6.4px;">Edit Heading...</div>
<div class="t dis" style="left:174px;top:462.95px;font-size:6.4px;">Delete Heading</div>
<div class="t lnk" style="left:237.3px;top:366.95px;font-size:6.4px;">Add New Items...</div>
<div class="t dis" style="left:237.3px;top:383.25px;font-size:6.4px;">Add From Limbo...</div>
<div class="t lnk" style="left:237.3px;top:399.45px;font-size:6.4px;">Edit Answers...</div>
<div class="t lnk" style="left:237.3px;top:415.75px;font-size:6.4px;">Edit References...</div>
<div class="t dis" style="left:237.3px;top:432.05px;font-size:6.4px;">Edit Extra UDA's...</div>
<div class="t lnk" style="left:237.3px;top:448.35px;font-size:6.4px;">Rename Items...</div>
<div class="t lnk" style="left:237.3px;top:462.95px;font-size:6.4px;">Remove to Limbo</div>
<div class="t lnk" style="left:237.3px;top:479.05px;font-size:6.4px;">Delete Permanently</div>
<div style="left:172.7px;top:453.8px;width:40.5px;height:0.8px;background:#b2b2b2"></div>
<div style="left:17.4px;top:519.7px;width:548.4px;height:30px;background:#fff"></div>
<div style="left:16.6px;top:549.5px;width:843px;height:12.4px;background:#dfeaf9"></div>
<div style="left:19.5px;top:549.7px;width:840px;height:10.3px;background:#ebebeb"></div>
<svg style="left:23.4px;top:552.2px" width="2.4" height="3.8"><path d="M2.4 0v3.8L0 1.9z" fill="#555"/></svg>
<div style="left:0px;top:561.6px;width:859px;height:11.4px;background:linear-gradient(#86aadf 0,#a8c6ee 9%,#d3e4fa 18%,#c3daf8 50%,#a9c8f0 100%)"></div>
<div style="left:566.7px;top:46.4px;width:300px;height:503.6px;background:#dce9fb;border-bottom:1.1px solid #70747c"></div>
<div style="left:567px;top:46.5px;width:293px;height:2.2px;background:linear-gradient(#c4d4ea,#dce9fb)"></div>
<div style="left:571px;top:50.4px;width:290px;height:16.4px;background:linear-gradient(#dbe8fa 0,#c3d7f4 45%,#a3c2ec 90%,#95b5e5 100%)"></div>
<div style="left:572.6px;top:52.5px;width:1.2px;height:11px;background:repeating-linear-gradient(#6a86c0 0 1.2px,transparent 1.2px 2.4px)"></div>
<div class="t b" style="left:577px;top:53.65px;font-size:7.2px;color:#111;letter-spacing:-0.04px;">Model View: GCEFA3A-TP100 &gt; /GCEFA3ADD -</div>
<svg style="left:574.6px;top:70.8px" width="9.6" height="9.8" viewBox="0 0 9.6 9.8"><rect x="0.4" y="4.2" width="5.2" height="5.2" fill="#dc6a14"/><rect x="0.4" y="4.2" width="5.2" height="1.6" fill="#b85008"/><path d="M5.8 5.6L8.8 8.8" stroke="#c9a64e" stroke-width="1.5" stroke-linecap="round"/><circle cx="3.9" cy="3.2" r="2.7" fill="#b9c6d2" fill-opacity="0.92" stroke="#8796a8" stroke-width="0.8"/><circle cx="3.3" cy="2.6" r="1.1" fill="#e6edf4"/></svg>
<div class="btn" style="left:586.2px;top:70.5px;width:26.8px;height:12.1px;line-height:10.9px">CE</div>
<div style="left:615px;top:70.4px;width:94.5px;height:12.3px;background:#fff;border:1px solid #e4edf8"></div>
<div style="left:616px;top:71.3px;width:82.5px;height:10.5px;background:#c7edc9"></div>
<div class="t" style="left:618.3px;top:70.85px;font-size:6.4px;">/GCEFA3A-TP100</div>
<svg style="left:702.5px;top:75.5px" width="4.6" height="2.8"><path d="M0 0h4.6L2.3 2.8z" fill="#111"/></svg>
<div style="left:711.5px;top:73.1px;width:7.4px;height:7.4px;background:linear-gradient(135deg,#c6c6c6,#eeeeee);border:0.8px solid #9a9a9a"></div>
<div class="t" style="left:721.3px;top:72.45px;font-size:6.4px;color:#222;">Track</div>
<div style="left:745.7px;top:73.1px;width:7.4px;height:7.4px;background:linear-gradient(135deg,#c6c6c6,#eeeeee);border:0.8px solid #9a9a9a"></div>
<div class="t" style="left:754.8px;top:72.45px;font-size:6.4px;color:#222;">Axes</div>
<div style="left:774.7px;top:73.1px;width:7.4px;height:7.4px;background:linear-gradient(135deg,#c6c6c6,#eeeeee);border:0.8px solid #9a9a9a"></div>
<div class="t" style="left:784px;top:72.45px;font-size:6.4px;color:#222;">P-Points</div>
<div style="left:813px;top:73.1px;width:7.4px;height:7.4px;background:linear-gradient(135deg,#c6c6c6,#eeeeee);border:0.8px solid #9a9a9a"></div>
<div class="t" style="left:822px;top:72.45px;font-size:6.4px;color:#222;">P-Lines</div>
<div class="btn" style="left:848px;top:70.3px;width:20px;height:12px;line-height:10.4px;text-align:left;padding-left:2.5px">Re</div>
<div class="t" style="left:575px;top:87.55px;font-size:6.4px;color:#111;">Model References:</div>
<div style="left:574.2px;top:97px;width:140.5px;height:96.9px;background:#c7edc9;border:1px solid #b2cab4"></div>
<div style="left:574.9px;top:97.7px;width:139.1px;height:13.5px;background:linear-gradient(#ffffff,#fbfbfb 50%,#efefef);border-bottom:0.7px solid #d8d8d8"></div>
<div style="left:615.2px;top:98.5px;width:0.6px;height:11.5px;background:#dedede"></div>
<div class="t" style="left:578.7px;top:99.6px;font-size:6.4px;color:#111;">Description</div>
<div class="t" style="left:619px;top:99.6px;font-size:6.4px;color:#111;">Value</div>
<div style="left:577.2px;top:111.64px;width:136px;height:10.12px;background:linear-gradient(#f4f4f4,#e6e6e6);border-radius:1px"></div>
<div style="left:574.9px;top:121.96px;width:139.1px;height:0.6px;background:#e2f5e3"></div>
<div style="left:574.9px;top:132.68px;width:139.1px;height:0.6px;background:#e2f5e3"></div>
<div style="left:574.9px;top:143.4px;width:139.1px;height:0.6px;background:#e2f5e3"></div>
<div style="left:574.9px;top:154.12px;width:139.1px;height:0.6px;background:#e2f5e3"></div>
<div style="left:574.9px;top:164.84px;width:139.1px;height:0.6px;background:#e2f5e3"></div>
<div style="left:574.9px;top:175.56px;width:139.1px;height:0.6px;background:#e2f5e3"></div>
<div style="left:574.9px;top:186.28px;width:139.1px;height:0.6px;background:#e2f5e3"></div>
<div style="left:615.2px;top:111.5px;width:0.6px;height:81.7px;background:#e2f5e3"></div>
<div class="t" style="left:578.7px;top:112.55px;font-size:6.4px;color:#111;">Category</div>
<div class="t" style="left:619px;top:112.55px;font-size:6.4px;color:#111;">/GCEFA3A-TP100</div>
<div class="t" style="left:578.7px;top:123.27px;font-size:6.4px;color:#111;">Component</div>
<div class="t" style="left:619px;top:123.27px;font-size:6.4px;color:#111;">/GCEFA3ADD</div>
<div class="t" style="left:578.7px;top:133.99px;font-size:6.4px;color:#111;">Point Set</div>
<div class="t" style="left:619px;top:133.99px;font-size:6.4px;color:#111;">/GCEFA3A-P</div>
<div class="t" style="left:578.7px;top:144.71px;font-size:6.4px;color:#111;">Geometry</div>
<div class="t" style="left:619px;top:144.71px;font-size:6.4px;color:#111;">/GCEFA3A-G</div>
<div class="t" style="left:578.7px;top:155.43px;font-size:6.4px;color:#111;">Data Set</div>
<div class="t" style="left:619px;top:155.43px;font-size:6.4px;color:#111;">/GCEFA3A-DTSE</div>
<div class="t" style="left:578.7px;top:166.15px;font-size:6.4px;color:#111;">Bolt Set</div>
<div class="t" style="left:619px;top:166.15px;font-size:6.4px;color:#111;">unset</div>
<div class="t" style="left:575px;top:195.85px;font-size:6.4px;color:#111;">Parameter Definitions:</div>
<div style="left:574.2px;top:205.5px;width:140.5px;height:105.4px;background:#c7edc9;border:1px solid #b2cab4"></div>
<div style="left:574.9px;top:206.2px;width:139.1px;height:13.5px;background:linear-gradient(#ffffff,#fbfbfb 50%,#efefef);border-bottom:0.7px solid #d8d8d8"></div>
<div style="left:591px;top:207px;width:0.6px;height:11.5px;background:#dedede"></div>
<div style="left:615.2px;top:207px;width:0.6px;height:11.5px;background:#dedede"></div>
<div class="t" style="left:578.7px;top:208.1px;font-size:6.4px;color:#111;">No</div>
<div class="t" style="left:594.7px;top:208.1px;font-size:6.4px;color:#111;">Value</div>
<div class="t" style="left:619.2px;top:208.1px;font-size:6.4px;color:#111;">Description</div>
<div style="left:577.2px;top:220.09px;width:136px;height:10.22px;background:linear-gradient(#f4f4f4,#e6e6e6);border-radius:1px"></div>
<div style="left:574.9px;top:230.51px;width:139.1px;height:0.6px;background:#e2f5e3"></div>
<div style="left:574.9px;top:241.33px;width:139.1px;height:0.6px;background:#e2f5e3"></div>
<div style="left:574.9px;top:252.15px;width:139.1px;height:0.6px;background:#e2f5e3"></div>
<div style="left:574.9px;top:262.97px;width:139.1px;height:0.6px;background:#e2f5e3"></div>
<div style="left:574.9px;top:273.79px;width:139.1px;height:0.6px;background:#e2f5e3"></div>
<div style="left:574.9px;top:284.61px;width:139.1px;height:0.6px;background:#e2f5e3"></div>
<div style="left:591px;top:220px;width:0.6px;height:79.4px;background:#e2f5e3"></div>
<div style="left:615.2px;top:220px;width:0.6px;height:79.4px;background:#e2f5e3"></div>
<div class="t" style="left:578.7px;top:221.05px;font-size:6.4px;color:#111;">1</div>
<div class="t" style="left:594.7px;top:221.05px;font-size:6.4px;color:#111;">15</div>
<div class="t" style="left:619.2px;top:221.05px;font-size:6.4px;color:#111;">NOM SIZE</div>
<div class="t" style="left:578.7px;top:231.87px;font-size:6.4px;color:#111;">2</div>
<div class="t" style="left:594.7px;top:231.87px;font-size:6.4px;color:#111;">11</div>
<div class="t" style="left:619.2px;top:231.87px;font-size:6.4px;color:#111;">CENTER TO BOTTOM OF FACE</div>
<div class="t" style="left:578.7px;top:242.69px;font-size:6.4px;color:#111;">3</div>
<div class="t" style="left:594.7px;top:242.69px;font-size:6.4px;color:#111;">SW</div>
<div class="t" style="left:619.2px;top:242.69px;font-size:6.4px;color:#111;">CONN TYPE</div>
<div class="t" style="left:578.7px;top:253.51px;font-size:6.4px;color:#111;">4</div>
<div class="t" style="left:594.7px;top:253.51px;font-size:6.4px;color:#111;">10</div>
<div class="t" style="left:619.2px;top:253.51px;font-size:6.4px;color:#111;">INSERTION DEPTH</div>
<div class="t" style="left:578.7px;top:264.33px;font-size:6.4px;color:#111;">5</div>
<div class="t" style="left:594.7px;top:264.33px;font-size:6.4px;color:#111;">30.8</div>
<div class="t" style="left:619.2px;top:264.33px;font-size:6.4px;color:#111;">SCOKET OUTSIDE DIAM</div>
<div class="t" style="left:578.7px;top:275.15px;font-size:6.4px;color:#111;">6</div>
<div class="t" style="left:594.7px;top:275.15px;font-size:6.4px;color:#111;">29.8</div>
<div class="t" style="left:619.2px;top:275.15px;font-size:6.4px;color:#111;">BODY DIAM</div>
<div style="left:575.3px;top:299.6px;width:138px;height:10px;background:#f0f0f0"></div>
<svg style="left:578.6px;top:302.9px" width="2.2" height="3.6"><path d="M2.2 0v3.6L0 1.8z" fill="#444"/></svg>
<div style="left:585px;top:300px;width:115px;height:9.3px;background:linear-gradient(#f6f6f6,#e2e2e2 50%,#cdcdcd);border:0.7px solid #a6a6a6;border-radius:1.5px"></div>
<div style="left:641px;top:302.9px;width:0.7px;height:3.6px;background:#6c6c6c"></div>
<div style="left:642.6px;top:302.9px;width:0.7px;height:3.6px;background:#6c6c6c"></div>
<div style="left:644.2px;top:302.9px;width:0.7px;height:3.6px;background:#6c6c6c"></div>
<svg style="left:706.8px;top:302.9px" width="2.2" height="3.6"><path d="M0 0v3.6L2.2 1.8z" fill="#444"/></svg>
<div class="t" style="left:575px;top:319.85px;font-size:6.4px;color:#111;">Desc:</div>
<div style="left:596.3px;top:319.2px;width:117.8px;height:12.2px;background:#fff;border:1px solid #e6eef8"></div>
<svg style="left:580.8px;top:336.6px" width="10.5" height="10.5" viewBox="0 0 10.5 10.5"><path d="M0.8 1L9.6 9.8M9.8 0.6L0.6 9.8" stroke="#e01818" stroke-width="1.1"/></svg>
<div class="btn" style="left:597px;top:335.2px;width:26.3px;height:12.5px;line-height:11.2px">Apply</div>
<div class="btn" style="left:628.8px;top:335.2px;width:26px;height:12.5px;line-height:11.2px">New</div>
<svg style="left:718.9px;top:99px" width="140.5" height="248.2" viewBox="718.9 99 140.5 248.2">
<defs>
<linearGradient id="gs" gradientUnits="userSpaceOnUse" x1="806" y1="156" x2="772" y2="262"><stop offset="0" stop-color="#9c9c9c"/><stop offset="0.13" stop-color="#b2b2b2"/><stop offset="0.36" stop-color="#9a9a9a"/><stop offset="0.62" stop-color="#6c6c6c"/><stop offset="0.86" stop-color="#474747"/><stop offset="1" stop-color="#3a3a3a"/></linearGradient>
<radialGradient id="gh" gradientUnits="userSpaceOnUse" cx="0" cy="0" r="1" gradientTransform="translate(876 207) rotate(10) scale(84 31)"><stop offset="0" stop-color="#fff" stop-opacity="1"/><stop offset="0.25" stop-color="#fff" stop-opacity="0.88"/><stop offset="0.55" stop-color="#fff" stop-opacity="0.38"/><stop offset="1" stop-color="#fff" stop-opacity="0"/></radialGradient>
<linearGradient id="gl" gradientUnits="userSpaceOnUse" x1="800" y1="170" x2="780" y2="262"><stop offset="0" stop-color="#c8c8c8" stop-opacity="0.45"/><stop offset="0.45" stop-color="#d8d8d8" stop-opacity="0.8"/><stop offset="1" stop-color="#f0f0f0" stop-opacity="1"/></linearGradient>
<clipPath id="cv"><rect x="718.4" y="98.6" width="141" height="248.6"/></clipPath>
</defs>
<rect x="718.4" y="98.6" width="141" height="248.6" fill="#000"/>
<g clip-path="url(#cv)">
<path d="M791.8 153.1 C786 151.3 776 153 768.2 158.3 C756 166.5 746 181 741 196 C736 212 736 226 743.4 238.1 L755.2 244.6 L770.9 252.5 L781.3 259.6 L790.5 262.9 C776 257 769.5 244 770 228 C772 200 800 172 819.2 168.8 L807.5 162.2 Z" fill="url(#gs)"/>
<path d="M819.2 168.8 C823 170 827 172.6 831 174 L841.5 177.1 L862 180.2 L862 278 L833.6 273.4 L807.5 268.2 L790.5 262.9 C776 257 769.5 244 770 228 C772 200 800 172 819.2 168.8 Z" fill="url(#gs)"/>
<path d="M819.2 168.8 C823 170 827 172.6 831 174 L841.5 177.1 L862 180.2 L862 278 L833.6 273.4 L807.5 268.2 L790.5 262.9 C776 257 769.5 244 770 228 C772 200 800 172 819.2 168.8 Z" fill="url(#gh)"/>
<path d="M819.2 168.8 C800 172 772 200 770 228 C769.5 244 776 257 790.5 262.9" fill="none" stroke="url(#gl)" stroke-width="0.8"/>
</g>
</svg>
<div class="t" style="left:719.3px;top:347.45px;font-size:6.4px;color:#111;">w45n31d</div>
<div class="t" style="left:774.3px;top:347.45px;font-size:6.4px;color:#111;">Parallel</div>
<div class="t" style="left:814.3px;top:347.45px;font-size:6.4px;color:#111;">Model</div>
<div class="t" style="left:841.3px;top:347.45px;font-size:6.4px;color:#111;">Rotate</div>
<div style="left:574.6px;top:358px;width:290px;height:0.9px;background:#c4cfdf"></div>
<div style="left:574.6px;top:358.9px;width:290px;height:0.8px;background:#f4f8fe"></div>
<div style="left:574.6px;top:363.8px;width:290px;height:136.2px;background:#f0f0f0;border-top:1px solid #b4b4b4;border-left:1px solid #a8a8a8"></div>
<div style="left:575.1px;top:364.3px;width:290px;height:12.45px;background:linear-gradient(#ffffff 0,#fafafa 50%,#ececec 100%)"></div>
<div class="t" style="left:592.2px;top:365.65px;font-size:6.4px;color:#111;width:40px;text-align:center;">Name</div>
<div class="t" style="left:640px;top:365.65px;font-size:6.4px;color:#111;width:40px;text-align:center;">Gtype</div>
<div class="t" style="left:659.1px;top:365.65px;font-size:6.4px;color:#111;width:40px;text-align:center;">PA1</div>
<div class="t" style="left:674.2px;top:365.65px;font-size:6.4px;color:#111;width:40px;text-align:center;">PA2</div>
<div class="t" style="left:689.5px;top:365.65px;font-size:6.4px;color:#111;width:40px;text-align:center;">PA3</div>
<div class="t" style="left:705.1px;top:365.65px;font-size:6.4px;color:#111;width:40px;text-align:center;">PA4</div>
<div class="t" style="left:723.8px;top:365.65px;font-size:6.4px;color:#111;width:40px;text-align:center;">PA6</div>
<div style="left:648.9px;top:365.3px;width:0.6px;height:10.45px;background:#dcdcdc"></div>
<div style="left:670.9px;top:365.3px;width:0.6px;height:10.45px;background:#dcdcdc"></div>
<div style="left:686.2px;top:365.3px;width:0.6px;height:10.45px;background:#dcdcdc"></div>
<div style="left:701.3px;top:365.3px;width:0.6px;height:10.45px;background:#dcdcdc"></div>
<div style="left:717.1px;top:365.3px;width:0.6px;height:10.45px;background:#dcdcdc"></div>
<div style="left:732.1px;top:365.3px;width:0.6px;height:10.45px;background:#dcdcdc"></div>
<div style="left:754.2px;top:365.3px;width:0.6px;height:10.45px;background:#dcdcdc"></div>
<svg style="left:0;top:0" width="859" height="573" viewBox="0 0 859 573"><rect x="575.1" y="376.75" width="18.1" height="11.87" fill="#f0f0f0" /><rect x="593.2" y="376.75" width="78" height="11.87" fill="#a9d3e2" /><rect x="671.2" y="376.75" width="190.8" height="11.87" fill="#c7edc9" /><rect x="575.1" y="388.62" width="18.1" height="11.87" fill="#f0f0f0" /><rect x="593.2" y="388.62" width="78" height="11.87" fill="#3399ff" /><rect x="671.2" y="388.62" width="190.8" height="11.87" fill="#3399ff" /><rect x="575.1" y="400.49" width="18.1" height="11.87" fill="#f0f0f0" /><rect x="593.2" y="400.49" width="78" height="11.87" fill="#a9d3e2" /><rect x="671.2" y="400.49" width="190.8" height="11.87" fill="#c7edc9" /><rect x="575.1" y="412.36" width="18.1" height="11.87" fill="#f0f0f0" /><rect x="593.2" y="412.36" width="78" height="11.87" fill="#a9d3e2" /><rect x="671.2" y="412.36" width="190.8" height="11.87" fill="#eeeefc" /><rect x="575.1" y="424.23" width="18.1" height="11.87" fill="#f0f0f0" /><rect x="593.2" y="424.23" width="78" height="11.87" fill="#a9d3e2" /><rect x="671.2" y="424.23" width="190.8" height="11.87" fill="#c7edc9" /><rect x="575.1" y="436.1" width="18.1" height="11.87" fill="#f0f0f0" /><rect x="593.2" y="436.1" width="78" height="11.87" fill="#a9d3e2" /><rect x="671.2" y="436.1" width="190.8" height="11.87" fill="#eeeefc" /><rect x="575.1" y="447.97" width="18.1" height="11.87" fill="#f0f0f0" /><rect x="593.2" y="447.97" width="78" height="11.87" fill="#a9d3e2" /><rect x="671.2" y="447.97" width="190.8" height="11.87" fill="#c7edc9" /><rect x="575.1" y="459.84" width="18.1" height="11.87" fill="#f0f0f0" /><rect x="593.2" y="459.84" width="78" height="11.87" fill="#a9d3e2" /><rect x="671.2" y="459.84" width="190.8" height="11.87" fill="#eeeefc" /><rect x="575.1" y="471.71" width="18.1" height="11.87" fill="#f0f0f0" /><rect x="593.2" y="471.71" width="78" height="11.87" fill="#a9d3e2" /><rect x="671.2" y="471.71" width="190.8" height="11.87" fill="#c7edc9" /><path d="M575.1 376.75H593.2" stroke="#b4b4b4" stroke-width="0.7"/><path d="M593.2 376.75H862" stroke="#8e8e8e" stroke-width="0.75"/><path d="M575.1 388.62H593.2" stroke="#b4b4b4" stroke-width="0.7"/><path d="M593.2 388.62H862" stroke="#747474" stroke-width="0.75"/><path d="M575.1 400.49H593.2" stroke="#b4b4b4" stroke-width="0.7"/><path d="M593.2 400.49H862" stroke="#747474" stroke-width="0.75"/><path d="M575.1 412.36H593.2" stroke="#b4b4b4" stroke-width="0.7"/><path d="M593.2 412.36H862" stroke="#747474" stroke-width="0.75"/><path d="M575.1 424.23H593.2" stroke="#b4b4b4" stroke-width="0.7"/><path d="M593.2 424.23H862" stroke="#747474" stroke-width="0.75"/><path d="M575.1 436.1H593.2" stroke="#b4b4b4" stroke-width="0.7"/><path d="M593.2 436.1H862" stroke="#747474" stroke-width="0.75"/><path d="M575.1 447.97H593.2" stroke="#b4b4b4" stroke-width="0.7"/><path d="M593.2 447.97H862" stroke="#747474" stroke-width="0.75"/><path d="M575.1 459.84H593.2" stroke="#b4b4b4" stroke-width="0.7"/><path d="M593.2 459.84H862" stroke="#747474" stroke-width="0.75"/><path d="M575.1 471.71H593.2" stroke="#b4b4b4" stroke-width="0.7"/><path d="M593.2 471.71H862" stroke="#747474" stroke-width="0.75"/><path d="M575.1 483.58H593.2" stroke="#b4b4b4" stroke-width="0.7"/><path d="M593.2 483.58H862" stroke="#747474" stroke-width="0.75"/><path d="M593.2 376.75V483.58" stroke="#747474" stroke-width="0.75"/><path d="M649.2 376.75V483.58" stroke="#747474" stroke-width="0.75"/><path d="M671.2 376.75V483.58" stroke="#747474" stroke-width="0.75"/><path d="M686.5 376.75V483.58" stroke="#747474" stroke-width="0.75"/><path d="M701.6 376.75V483.58" stroke="#747474" stroke-width="0.75"/><path d="M717.4 376.75V483.58" stroke="#747474" stroke-width="0.75"/><path d="M732.4 376.75V483.58" stroke="#747474" stroke-width="0.75"/><path d="M754.5 376.75V483.58" stroke="#747474" stroke-width="0.75"/></svg>
<div class="t" style="left:596.2px;top:377.54px;color:#1a1a1a">GCEFA3ADD</div>
<div class="t" style="left:652.1px;top:377.54px;color:#1a1a1a">ELBO</div>
<div class="t" style="left:674.4px;top:377.54px;color:#1a1a1a">15</div>
<div class="t" style="left:689.7px;top:377.54px;color:#1a1a1a">11</div>
<div class="t" style="left:705.4px;top:377.54px;color:#1a1a1a">SW</div>
<div class="t" style="left:720.8px;top:377.54px;color:#1a1a1a">10</div>
<div class="t" style="left:736.2px;top:377.54px;color:#1a1a1a">30.8</div>
<div class="t" style="left:758.1px;top:377.54px;color:#1a1a1a">29.8</div>
<div class="t" style="left:596.2px;top:389.41px;color:#fff">GCEFA3AEE</div>
<div class="t" style="left:652.1px;top:389.41px;color:#fff">ELBO</div>
<div class="t" style="left:674.4px;top:389.41px;color:#fff">20</div>
<div class="t" style="left:689.7px;top:389.41px;color:#fff">13</div>
<div class="t" style="left:705.4px;top:389.41px;color:#fff">SW</div>
<div class="t" style="left:720.8px;top:389.41px;color:#fff">13</div>
<div class="t" style="left:736.2px;top:389.41px;color:#fff">37.4</div>
<div class="t" style="left:758.1px;top:389.41px;color:#fff">36.2</div>
<div class="t" style="left:596.2px;top:401.28px;color:#1a1a1a">GCEFA3AFF</div>
<div class="t" style="left:652.1px;top:401.28px;color:#1a1a1a">ELBO</div>
<div class="t" style="left:674.4px;top:401.28px;color:#1a1a1a">25</div>
<div class="t" style="left:689.7px;top:401.28px;color:#1a1a1a">14</div>
<div class="t" style="left:705.4px;top:401.28px;color:#1a1a1a">SW</div>
<div class="t" style="left:720.8px;top:401.28px;color:#1a1a1a">13</div>
<div class="t" style="left:736.2px;top:401.28px;color:#1a1a1a">45.4</div>
<div class="t" style="left:758.1px;top:401.28px;color:#1a1a1a">44.2</div>
<div class="t" style="left:596.2px;top:413.15px;color:#1a1a1a">GCEFA3AGG</div>
<div class="t" style="left:652.1px;top:413.15px;color:#1a1a1a">ELBO</div>
<div class="t" style="left:674.4px;top:413.15px;color:#1a1a1a">32</div>
<div class="t" style="left:689.7px;top:413.15px;color:#1a1a1a">18</div>
<div class="t" style="left:705.4px;top:413.15px;color:#1a1a1a">SW</div>
<div class="t" style="left:720.8px;top:413.15px;color:#1a1a1a">13</div>
<div class="t" style="left:736.2px;top:413.15px;color:#1a1a1a">55.5</div>
<div class="t" style="left:758.1px;top:413.15px;color:#1a1a1a">53.9</div>
<div class="t" style="left:596.2px;top:425.02px;color:#1a1a1a">GCEFA3AHH</div>
<div class="t" style="left:652.1px;top:425.02px;color:#1a1a1a">ELBO</div>
<div class="t" style="left:674.4px;top:425.02px;color:#1a1a1a">40</div>
<div class="t" style="left:689.7px;top:425.02px;color:#1a1a1a">21</div>
<div class="t" style="left:705.4px;top:425.02px;color:#1a1a1a">SW</div>
<div class="t" style="left:720.8px;top:425.02px;color:#1a1a1a">13</div>
<div class="t" style="left:736.2px;top:425.02px;color:#1a1a1a">62</div>
<div class="t" style="left:758.1px;top:425.02px;color:#1a1a1a">59.8</div>
<div class="t" style="left:596.2px;top:436.89px;color:#1a1a1a">GCEFA3AJJ</div>
<div class="t" style="left:652.1px;top:436.89px;color:#1a1a1a">ELBO</div>
<div class="t" style="left:674.4px;top:436.89px;color:#1a1a1a">50</div>
<div class="t" style="left:689.7px;top:436.89px;color:#1a1a1a">26</div>
<div class="t" style="left:705.4px;top:436.89px;color:#1a1a1a">SW</div>
<div class="t" style="left:720.8px;top:436.89px;color:#1a1a1a">16</div>
<div class="t" style="left:736.2px;top:436.89px;color:#1a1a1a">75.1</div>
<div class="t" style="left:758.1px;top:436.89px;color:#1a1a1a">73.6</div>
<div class="t" style="left:596.2px;top:448.76px;color:#1a1a1a">GCEFA3AKK</div>
<div class="t" style="left:652.1px;top:448.76px;color:#1a1a1a">ELBO</div>
<div class="t" style="left:674.4px;top:448.76px;color:#1a1a1a">65</div>
<div class="t" style="left:689.7px;top:448.76px;color:#1a1a1a">29</div>
<div class="t" style="left:705.4px;top:448.76px;color:#1a1a1a">SW</div>
<div class="t" style="left:720.8px;top:448.76px;color:#1a1a1a">16</div>
<div class="t" style="left:736.2px;top:448.76px;color:#1a1a1a">94.7</div>
<div class="t" style="left:758.1px;top:448.76px;color:#1a1a1a">92.6</div>
<div class="t" style="left:596.2px;top:460.62px;color:#1a1a1a">GCEFA3ALL</div>
<div class="t" style="left:652.1px;top:460.62px;color:#1a1a1a">ELBO</div>
<div class="t" style="left:674.4px;top:460.62px;color:#1a1a1a">80</div>
<div class="t" style="left:689.7px;top:460.62px;color:#1a1a1a">32</div>
<div class="t" style="left:705.4px;top:460.62px;color:#1a1a1a">SW</div>
<div class="t" style="left:720.8px;top:460.62px;color:#1a1a1a">16</div>
<div class="t" style="left:736.2px;top:460.62px;color:#1a1a1a">109.8</div>
<div class="t" style="left:758.1px;top:460.62px;color:#1a1a1a">107.4</div>
<svg style="left:582.8px;top:392.02px" width="3.4" height="5"><path d="M0 0L3.4 2.5L0 5z" fill="#111"/></svg>
<div class="t lnk" style="left:579.6px;top:516.55px;font-size:6.4px;">Category Attributes</div>
<svg style="left:644px;top:516.5px" width="10.5" height="10.5" viewBox="0 0 10.5 10.5"><path d="M0.8 1L9.6 9.8M9.8 0.6L0.6 9.8" stroke="#e01818" stroke-width="1.1"/></svg>
<div class="btn" style="left:657.8px;top:514.8px;width:35.4px;height:12.3px;line-height:11px">New</div>
<div class="btn" style="left:698.8px;top:514.8px;width:35px;height:12.3px;line-height:11px">Copy</div>
<div class="btn" style="left:739.3px;top:514.8px;width:35.3px;height:12.3px;line-height:11px">Import...</div>
<div class="btn" style="left:780.1px;top:514.8px;width:35.6px;height:12.3px;line-height:11px">Export...</div>
<div style="left:571px;top:535.6px;width:290px;height:10px;background:#ececec"></div>
<svg style="left:573.8px;top:538.8px" width="2.4" height="3.8"><path d="M2.4 0v3.8L0 1.9z" fill="#444"/></svg>
<div style="left:581px;top:536px;width:285px;height:9.2px;background:linear-gradient(#f6f6f6,#e2e2e2 50%,#cdcdcd);border:0.7px solid #a6a6a6;border-radius:1.5px"></div>
<div style="left:745px;top:538.8px;width:0.7px;height:3.6px;background:#6c6c6c"></div>
<div style="left:746.6px;top:538.8px;width:0.7px;height:3.6px;background:#6c6c6c"></div>
<div style="left:748.2px;top:538.8px;width:0.7px;height:3.6px;background:#6c6c6c"></div>
<svg style="left:0;top:0" width="859" height="573" viewBox="0 0 859 573"><rect x="16.4" y="44.6" width="843" height="1.9" fill="#757575" /></svg>
</body></html>
